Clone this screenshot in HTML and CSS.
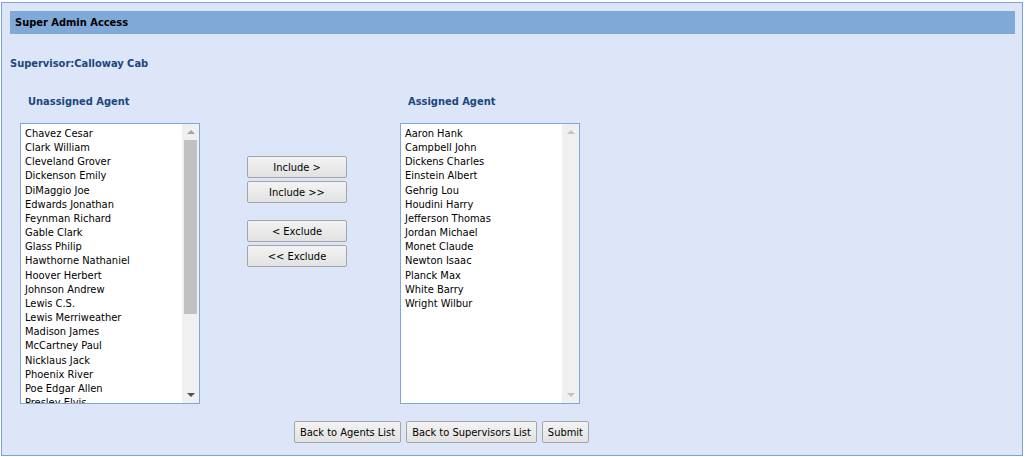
FILE: index.html
```html
<!DOCTYPE html>
<html lang="en">
<head>
    <meta charset="UTF-8">
    <meta name="viewport" content="width=device-width, initial-scale=1.0">
    <title>Super Admin Access</title>
    <link rel="stylesheet" href="styles.css">
</head>
<body>
    <div class="panel">
        <div class="panel-header">Super Admin Access</div>

        <div class="supervisor">Supervisor:Calloway Cab</div>

        <div class="assign">
            <div class="list-col">
                <div class="list-title">Unassigned Agent</div>
                <div class="listbox">
                    <ul class="list-items">
                        <li>Chavez Cesar</li>
                        <li>Clark William</li>
                        <li>Cleveland Grover</li>
                        <li>Dickenson Emily</li>
                        <li>DiMaggio Joe</li>
                        <li>Edwards Jonathan</li>
                        <li>Feynman Richard</li>
                        <li>Gable Clark</li>
                        <li>Glass Philip</li>
                        <li>Hawthorne Nathaniel</li>
                        <li>Hoover Herbert</li>
                        <li>Johnson Andrew</li>
                        <li>Lewis C.S.</li>
                        <li>Lewis Merriweather</li>
                        <li>Madison James</li>
                        <li>McCartney Paul</li>
                        <li>Nicklaus Jack</li>
                        <li>Phoenix River</li>
                        <li>Poe Edgar Allen</li>
                        <li>Presley Elvis</li>
                        <li>Roosevelt Theodore</li>
                    </ul>
                    <div class="scrollbar">
                        <span class="arrow up"></span>
                        <div class="track"><div class="thumb"></div></div>
                        <span class="arrow down"></span>
                    </div>
                </div>
            </div>

            <div class="move-buttons">
                <button class="btn move">Include &gt;</button>
                <button class="btn move">Include &gt;&gt;</button>
                <button class="btn move spaced">&lt; Exclude</button>
                <button class="btn move">&lt;&lt; Exclude</button>
            </div>

            <div class="list-col">
                <div class="list-title">Assigned Agent</div>
                <div class="listbox">
                    <ul class="list-items">
                        <li>Aaron Hank</li>
                        <li>Campbell John</li>
                        <li>Dickens Charles</li>
                        <li>Einstein Albert</li>
                        <li>Gehrig Lou</li>
                        <li>Houdini Harry</li>
                        <li>Jefferson Thomas</li>
                        <li>Jordan Michael</li>
                        <li>Monet Claude</li>
                        <li>Newton Isaac</li>
                        <li>Planck Max</li>
                        <li>White Barry</li>
                        <li>Wright Wilbur</li>
                    </ul>
                    <div class="scrollbar disabled">
                        <span class="arrow up"></span>
                        <div class="track"></div>
                        <span class="arrow down"></span>
                    </div>
                </div>
            </div>
        </div>

        <div class="actions">
            <button class="btn">Back to Agents List</button>
            <button class="btn">Back to Supervisors List</button>
            <button class="btn">Submit</button>
        </div>
    </div>
</body>
</html>
```

FILE: styles.css
```css
* {
    margin: 0;
    padding: 0;
    box-sizing: border-box;
}

body {
    font-family: Tahoma, "DejaVu Sans Condensed", sans-serif;
    font-size: 11px;
    color: #000;
    background-color: #fff;
    padding: 2px 3px 0 1px;
}

.panel {
    height: 454px;
    background-color: #dce6f8;
    border: 1px solid #7ea3d6;
    padding: 8px 7px 0 8px;
}

/* Header bar */
.panel-header {
    height: 23px;
    line-height: 23px;
    background-color: #80a9d8;
    padding-left: 5px;
    font-weight: bold;
}

.supervisor {
    margin-top: 23px;
    line-height: 14px;
    font-weight: bold;
    color: #1b4680;
}

/* Agent lists */
.assign {
    display: flex;
    margin-top: 24px;
    padding-left: 10px;
}

.list-title {
    padding-left: 8px;
    line-height: 14px;
    font-weight: bold;
    color: #1b4680;
    margin-bottom: 14px;
}

.listbox {
    display: flex;
    width: 180px;
    height: 281px;
    background-color: #fff;
    border: 1px solid #82a6d6;
    overflow: hidden;
}

.list-items {
    flex: 1;
    list-style: none;
    padding: 3px 0 0 4px;
    line-height: 14.15px;
    white-space: nowrap;
    overflow: hidden;
}

.scrollbar {
    width: 17px;
    display: flex;
    flex-direction: column;
    align-items: center;
    background-color: #f0f0f0;
}

.track {
    flex: 1;
    width: 100%;
    padding: 0 2px;
}

.thumb {
    height: 174px;
    background-color: #c1c1c1;
}

.arrow {
    width: 0;
    height: 0;
    border-left: 4px solid transparent;
    border-right: 4px solid transparent;
    margin: 6px 0;
}

.arrow.up {
    border-bottom: 4px solid #a3a3a3;
}

.arrow.down {
    border-top: 4px solid #505050;
}

.scrollbar.disabled .arrow.up,
.scrollbar.disabled .arrow.down {
    border-bottom-color: #c2c2c2;
    border-top-color: #c2c2c2;
}

.scrollbar.disabled .arrow.up {
    border-top: 0;
}

.scrollbar.disabled .arrow.down {
    border-bottom: 0;
}

.move-buttons {
    display: flex;
    flex-direction: column;
    gap: 3px;
    margin: 61px 53px 0 47px;
}

/* Buttons */
.btn {
    font-family: inherit;
    font-size: 11px;
    color: #000;
    height: 22px;
    padding: 0 5px;
    background: linear-gradient(#f3f3f3, #e2e2e2);
    border: 1px solid #a5a5a5;
    border-radius: 2px;
    cursor: pointer;
}

.btn:hover {
    background: linear-gradient(#eaf4fc, #d9ebf9);
}

.btn.move {
    width: 100px;
}

.btn.spaced {
    margin-top: 14px;
}

.actions {
    display: flex;
    gap: 5px;
    margin-top: 17px;
    padding-left: 284px;
}
```
